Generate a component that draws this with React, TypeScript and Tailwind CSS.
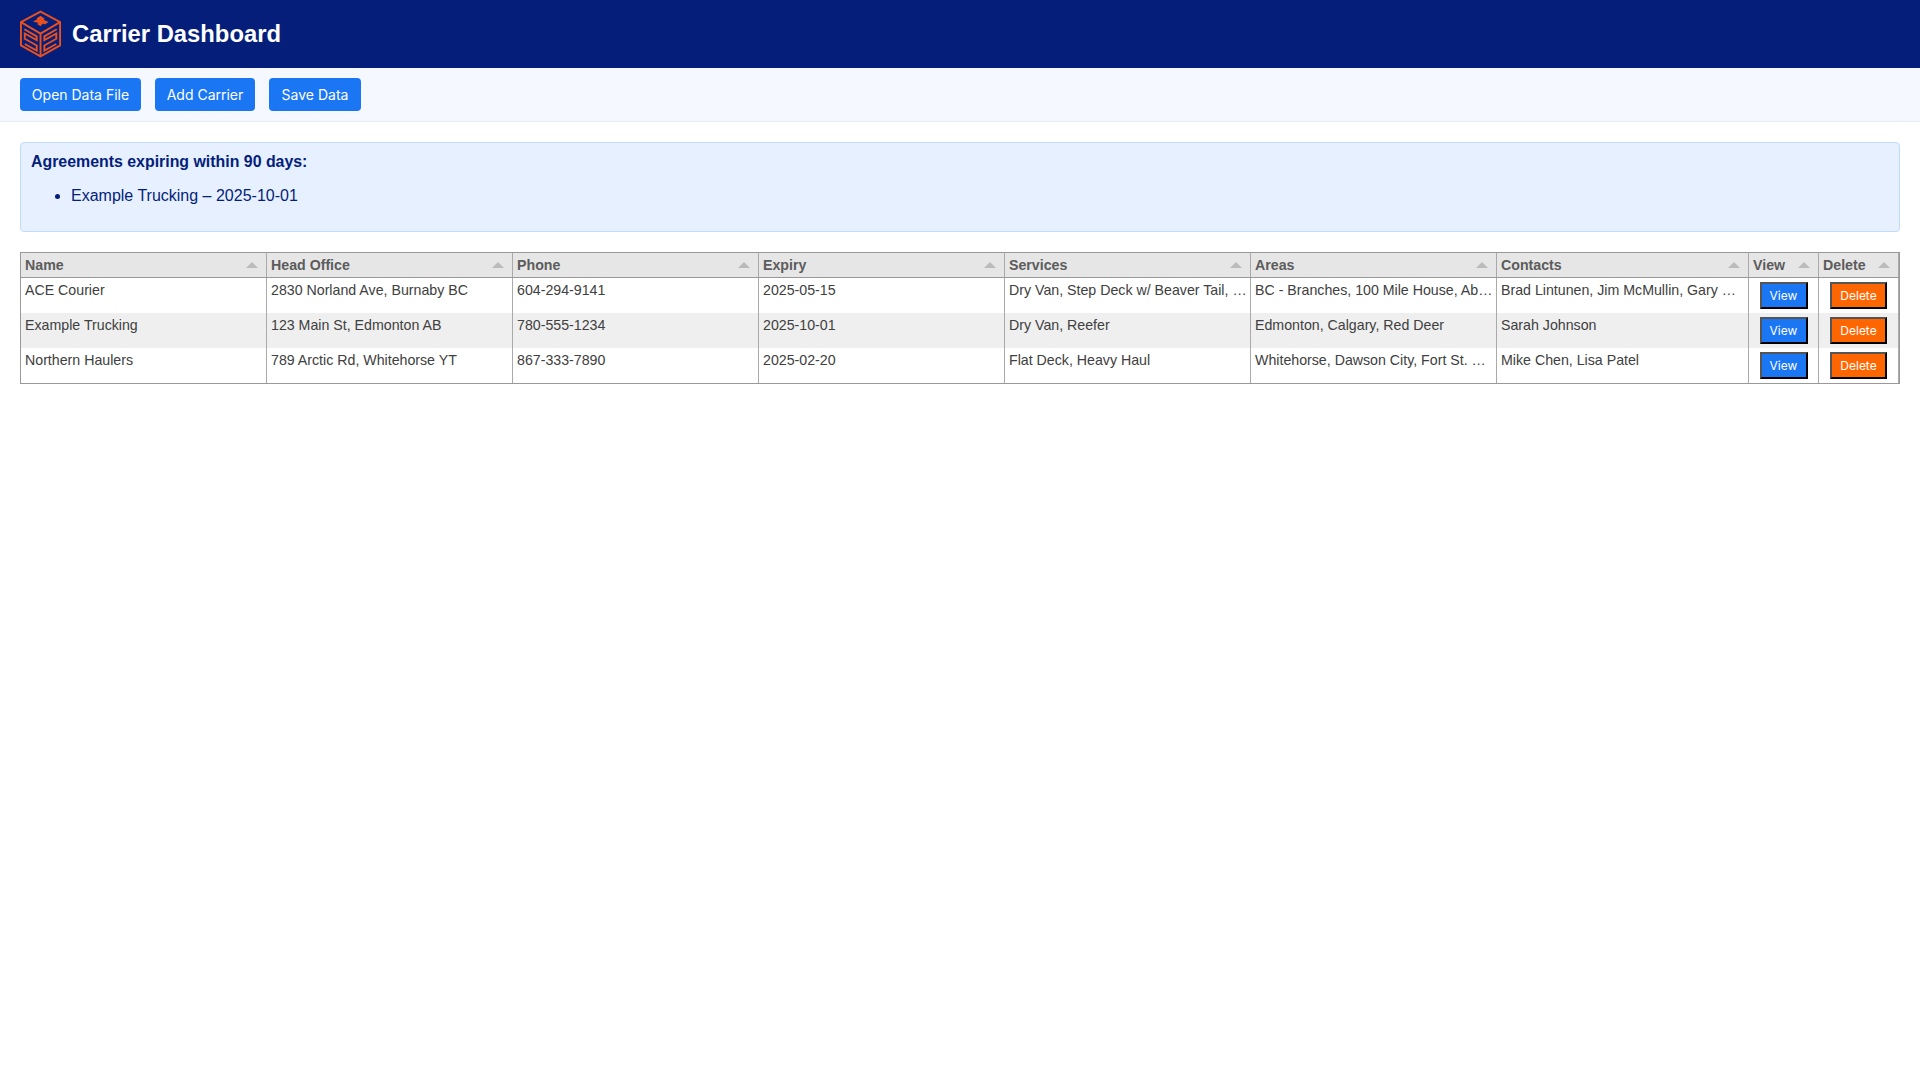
const rows = [
  ["ACE Courier", "2830 Norland Ave, Burnaby BC", "604-294-9141", "2025-05-15", "Dry Van, Step Deck w/ Beaver Tail, Flat Deck, Heavy Haul", "BC - Branches, 100 Mile House, Abbotsford, Burnaby, Castlegar", "Brad Lintunen, Jim McMullin, Gary Wilson, Dana Reid"],
  ["Example Trucking", "123 Main St, Edmonton AB", "780-555-1234", "2025-10-01", "Dry Van, Reefer", "Edmonton, Calgary, Red Deer", "Sarah Johnson"],
  ["Northern Haulers", "789 Arctic Rd, Whitehorse YT", "867-333-7890", "2025-02-20", "Flat Deck, Heavy Haul", "Whitehorse, Dawson City, Fort St. Mary, Fort Nelson", "Mike Chen, Lisa Patel"],
];
const headers = ["Name", "Head Office", "Phone", "Expiry", "Services", "Areas", "Contacts", "View", "Delete"];
const gridCols = "grid grid-cols-[246px_246px_246px_246px_246px_246px_252px_70px_80px]";

function Logo() {
  return (
    <svg width="42" height="48" viewBox="0 0 44 50" fill="none" stroke="#e8501f" strokeWidth="2" strokeLinejoin="miter">
      <path d="M21.5 1.5 42 12.5V37L21.5 48.5 1 37V12.5Z" />
      <path d="M1 12.5 21.5 24.5 42 12.5M21.5 24.5V48.5" />
      <path d="M4.5 20 17.5 27.5V31.5L5 24.5V30L17.5 37V42.5L5 35.5" />
      <path d="M38.5 20 25.5 27.5V31.5L38 24.5V30L25.5 37V42.5L38 35.5" />
      <path d="M21.5 6 26 9 24.5 10 30 12.5 26 15 24 14 21.5 17 18 14.5 19.5 13.5 13.5 12 18 9.5 17.5 8.5Z" fill="#e8501f" stroke="none" />
    </svg>
  );
}

function ToolButton({ label, width }: { label: string; width: string }) {
  return (
    <button className={"h-[33px] rounded-[4px] bg-[#1a76f2] font-['Inter',sans-serif] text-[14px] font-normal text-white " + width}>
      {label}
    </button>
  );
}

function RowButton({ label, danger }: { label: string; danger?: boolean }) {
  return (
    <button
      className={
        "h-[27px] border-2 border-t-[#555] border-l-[#555] border-r-black border-b-black font-['Inter',sans-serif] text-[12px] font-normal text-white " +
        (danger ? "w-[57px] bg-[#ff6600]" : "w-[48px] bg-[#1a76f2]")
      }
    >
      {label}
    </button>
  );
}

export default function App() {
  return (
    <div className="min-h-screen bg-white font-['Liberation_Sans',sans-serif]">
      <header className="flex h-[68px] items-center gap-[10px] bg-[#041e7a] px-5">
        <Logo />
        <h1 className="text-[23.8px] font-bold text-white">Carrier Dashboard</h1>
      </header>
      <div className="flex h-[54px] items-start gap-[14px] border-b border-[#e6ecf8] bg-[#f5f8ff] px-5 pt-[10px]">
        <ToolButton label="Open Data File" width="w-[121px]" />
        <ToolButton label="Add Carrier" width="w-[100px]" />
        <ToolButton label="Save Data" width="w-[92px]" />
      </div>
      <main className="p-5">
        <section className="rounded-[4px] border border-[#bfdbfe] bg-[#e6f0ff] p-[10px] text-[16px] leading-[18px] text-[#041e7a]">
          <strong className="block text-[15.9px] font-bold">Agreements expiring within 90 days:</strong>
          <ul className="my-4 list-disc pl-10">
            <li>Example Trucking – 2025-10-01</li>
          </ul>
        </section>
        <div className="mt-5 border border-[#999] text-[14.2px]">
          <div className={gridCols + " border-b border-[#999] bg-[#e6e6e6] font-bold text-[#5c5c5c]"}>
            {headers.map((h) => (
              <div key={h} className="flex h-[24px] items-center justify-between border-r border-[#aaa] pr-[8px] pl-[4px] leading-[16px]">
                <span>{h}</span>
                <span className="h-0 w-0 border-x-[6px] border-b-[6px] border-x-transparent border-b-[#bbb]" />
              </div>
            ))}
          </div>
          {rows.map((row, i) => (
            <div key={row[0]} className={gridCols + " h-[35px] text-[#404040] " + (i % 2 ? "bg-[#efefef]" : "bg-white")}>
              {row.map((c) => (
                <div key={c} className="truncate border-r border-[#aaa] py-[4px] pr-[2px] pl-[4px] leading-[17px]">
                  {c}
                </div>
              ))}
              <div className="flex items-start justify-center border-r border-[#aaa] pt-[4px]">
                <RowButton label="View" />
              </div>
              <div className="flex items-start justify-center border-r border-[#aaa] pt-[4px]">
                <RowButton label="Delete" danger />
              </div>
            </div>
          ))}
        </div>
      </main>
    </div>
  );
}
